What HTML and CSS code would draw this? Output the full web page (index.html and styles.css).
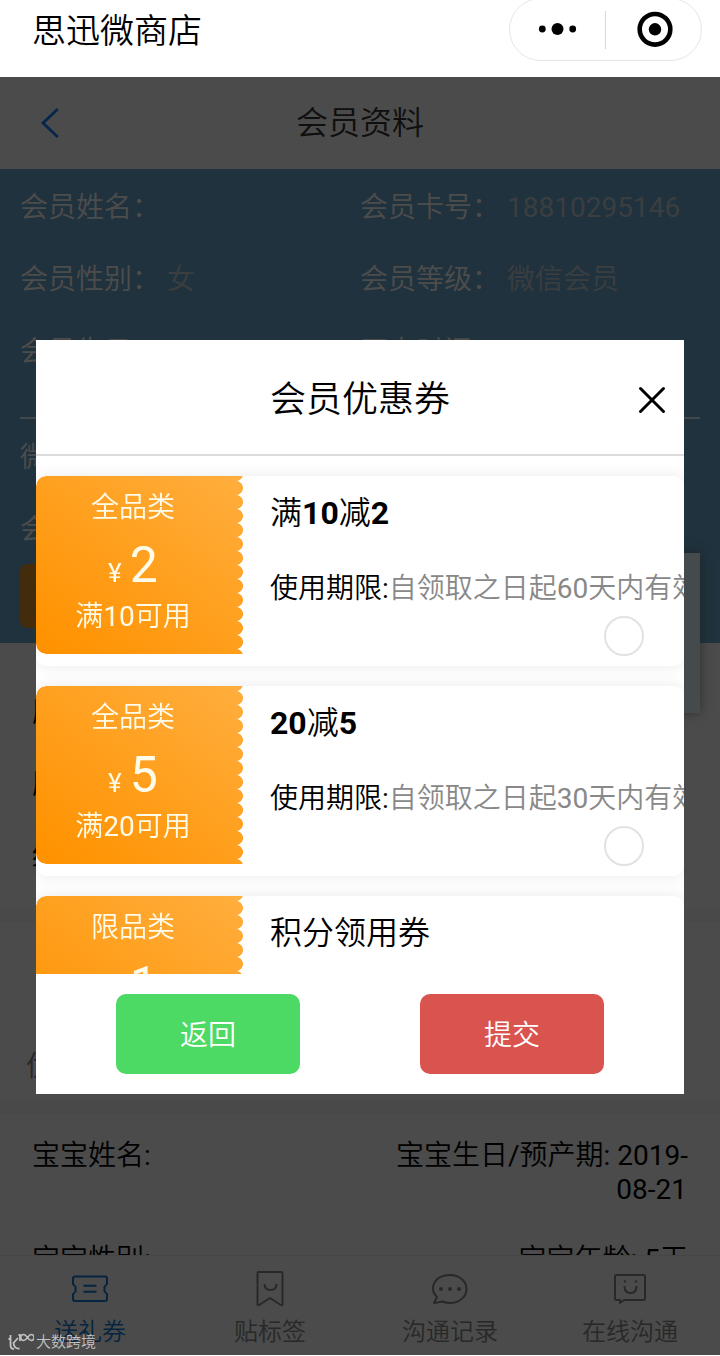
FILE: index.html
```
<!DOCTYPE html>
<html lang="zh-CN">
<head>
<meta charset="utf-8">
<title>会员资料</title>
<link rel="stylesheet" href="styles.css">
</head>
<body>
<div class="app">
  <header class="topbar">
    <h1 class="topbar-title">思迅微商店</h1>
    <div class="capsule">
      <svg class="capsule-icon" width="95" height="62" viewBox="0 0 95 62"><circle cx="32.300" cy="30" r="3.400"/><circle cx="47.500" cy="30" r="6"/><circle cx="62.700" cy="30" r="3.400"/></svg>
      <span class="capsule-line"></span>
      <svg class="capsule-icon" width="96" height="62" viewBox="0 0 96 62"><circle cx="50" cy="30.300" r="15.300" fill="none" stroke="#000" stroke-width="4.600"/><circle cx="50" cy="30.300" r="6.200"/></svg>
    </div>
  </header>

  <main class="page">
    <nav class="navbar">
      <svg class="back" width="24" height="36" viewBox="0 0 24 36"><path d="M21.800 4 7 18l14.800 14" fill="none" stroke="#157efb" stroke-width="2.800"/></svg>
      <h2 class="navbar-title">会员资料</h2>
    </nav>
    <section class="profile">
      <div class="row"><p class="cell">会员姓名：</p><p class="cell">会员卡号：<span class="value">18810295146</span></p></div>
      <div class="row"><p class="cell">会员性别：<span class="value">女</span></p><p class="cell">会员等级：<span class="value">微信会员</span></p></div>
      <div class="row"><p class="cell">会员生日：</p><p class="cell">开卡时间：</p></div>
      <div class="divider"></div>
      <div class="row"><p class="cell">微信</p></div>
      <div class="row"><p class="cell">会员</p></div>
      <div class="profile-action"></div>
      <div class="popover"></div>
    </section>
    <section class="stats">
      <p class="stat">历史</p><p class="stat">历史</p><p class="stat">结余</p>
    </section>
    <section class="offers"><p class="offer-label">优惠</p></section>
    <section class="baby">
      <div class="baby-row"><p>宝宝姓名:</p><p class="baby-right">宝宝生日/预产期: 2019-<br><span class="baby-day">08-21</span></p></div>
      <div class="baby-row"><p>宝宝性别:</p><p class="baby-right">宝宝年龄: 5天</p></div>
    </section>
    <footer class="tabs">
      <div class="tab tab-active">
        <svg class="tab-icon" width="40" height="40" viewBox="0 0 40 40"><path d="M3 8.500q0-2 2-2h30q2 0 2 2v5.500q-1 1.500-2.500 2.500v5q1.500 1 2.500 2.500V29q0 2-2 2H5q-2 0-2-2v-5q1.500-1 2.500-2.500v-5Q4 15.500 3 14z"/><path d="M13.500 15.700h13M13.500 21.700h13"/></svg>
        <span>送礼券</span>
      </div>
      <div class="tab">
        <svg class="tab-icon" width="40" height="40" viewBox="0 0 40 40"><path d="M8.500 2h23q1 0 1 1v31q0 2-1.600 1L20 28 9.100 35q-1.600 1-1.600-1V3q0-1 1-1z"/><path d="M14.500 14q0 6 6 6t6-6"/></svg>
        <span>贴标签</span>
      </div>
      <div class="tab">
        <svg class="tab-icon" width="40" height="40" viewBox="0 0 40 40"><path d="M7 27Q2.500 22.500 3 17.500C4 8.500 12 5 20 5c9 0 16.500 6 16.500 14S29 33 20 33q-4 0-7-1.500L4 33z"/><g class="tab-dots"><circle cx="11" cy="19" r="2"/><circle cx="20" cy="19" r="2"/><circle cx="29" cy="19" r="2"/></g></svg>
        <span>沟通记录</span>
      </div>
      <div class="tab">
        <svg class="tab-icon" width="40" height="40" viewBox="0 0 40 40"><path d="M6.500 5h27Q35 5 35 6.500v22q0 1.500-1.500 1.500H14l-4 3v-3H6.500Q5 30 5 28.500v-22Q5 5 6.500 5z"/><path d="M14.500 16q0 7 6 7t6-7"/><g class="tab-dots"><circle cx="15" cy="11.500" r="1.200"/><circle cx="26" cy="11.500" r="1.200"/></g></svg>
        <span>在线沟通</span>
      </div>
    </footer>
  </main>

  <div class="mask">
    <section class="modal">
      <header class="modal-head">
        <h3 class="modal-title">会员优惠券</h3>
        <svg class="close" width="28" height="28" viewBox="0 0 28 28"><path d="M2.500 2.500l23 23M25.500 2.500l-23 23" fill="none" stroke="#000" stroke-width="3" stroke-linecap="round"/></svg>
      </header>
      <div class="coupons">
        <article class="coupon">
          <div class="ticket"><p class="kind">全品类</p><p class="amount"><small>¥</small>2</p><p class="limit">满10可用</p></div>
          <div class="info"><h4 class="name">满<b>10</b>减<b>2</b></h4><p class="term">使用期限:<span class="term-value">自领取之日起60天内有效</span></p><span class="radio"></span></div>
        </article>
        <article class="coupon">
          <div class="ticket"><p class="kind">全品类</p><p class="amount"><small>¥</small>5</p><p class="limit">满20可用</p></div>
          <div class="info"><h4 class="name"><b>20</b>减<b>5</b></h4><p class="term">使用期限:<span class="term-value">自领取之日起30天内有效</span></p><span class="radio"></span></div>
        </article>
        <article class="coupon">
          <div class="ticket"><p class="kind">限品类</p><p class="amount"><small>¥</small>1</p></div>
          <div class="info"><h4 class="name">积分领用券</h4></div>
        </article>
      </div>
      <footer class="actions"><button class="btn btn-back">返回</button><button class="btn btn-submit">提交</button></footer>
    </section>
  </div>

  <div class="watermark">
    <svg width="26" height="18" viewBox="0 0 26 18"><path d="M2.500 2v10q0 4 3.500 4M0.500 6h2M5 10.500l5-5.500M5.500 10q.5 6 6 5.500M10.500 2h1.500v6" fill="none" stroke="#c2c2c2" stroke-width="1.800"/><path d="M19.500 4.500c-1.500-2-2.500-3-3.700-3a2.800 2.800 0 0 0 0 6c1.200 0 2.200-1 3.700-3s2.500-3 3.500-3a2.800 2.800 0 0 1 0 6c-1 0-2-1-3.500-3z" fill="none" stroke="#c2c2c2" stroke-width="1.400"/></svg>
    <span>大数跨境</span>
  </div>
</div>
</body>
</html>
```
FILE: styles.css
```
* { box-sizing: border-box; margin: 0; padding: 0; }
body { background: #fff; font-family: Roboto, "Noto Sans CJK SC DemiLight", "Noto Sans CJK SC", sans-serif; font-size: 28px; color: #000; }
h1, h2, h3, h4 { font-weight: 400; }
.app { position: relative; width: 720px; height: 1356px; overflow: hidden; display: flex; flex-direction: column; font-weight: 400; }

.topbar { height: 77px; display: flex; justify-content: space-between; padding: 0 18px 0 32px; }
.topbar-title { font-size: 34px; line-height: 62px; }
.capsule { width: 193px; height: 63px; margin-top: -2px; border: 1px solid #e6e6e6; border-radius: 32px; display: flex; align-items: center; }
.capsule-icon { flex: none; }
.capsule-line { flex: none; width: 1px; height: 38px; margin-right: -1px; background: #d8d8d8; }

.page { height: 1278px; background: #fafafa; overflow: hidden; display: flex; flex-direction: column; }
.navbar { height: 92px; flex: none; display: flex; align-items: center; padding-left: 36px; }
.navbar-title { flex: 1; margin-right: 60px; text-align: center; font-size: 32px; line-height: 90px; color: #333; }

.profile { position: relative; height: 474px; flex: none; background: #6ba7cb; color: #fff; padding: 3px 20px; }
.row { height: 72px; line-height: 72px; display: grid; grid-template-columns: 1fr 1fr; }
.value { margin-left: 7px; color: #c4d0d6; }
.divider { height: 2px; margin: 29px 0 3px; background: #fff; opacity: .8; }
.profile-action { width: 160px; height: 64px; margin-top: -2px; border-radius: 8px; background: #e09326; }
.popover { position: absolute; right: 20px; top: 384px; width: 220px; height: 160px; background: #e8fafe; box-shadow: 0 0 10px rgba(90, 90, 90, .6); }

.stats { height: 266px; flex: none; padding: 34px 32px 0; }
.stat { height: 72px; line-height: 72px; }
.offers { height: 205px; flex: none; padding-top: 113px; border-top: 13px solid #f5f5f5; border-bottom: 13px solid #f4f4f4; }
.offer-label { padding-left: 26px; line-height: 64px; color: #888; }
.baby { height: 141px; flex: none; padding: 25px 32px 0 32px; overflow: hidden; }
.baby-row { display: flex; justify-content: space-between; line-height: 34px; height: 104px; }
.baby-right { text-align: right; }
.baby-day { padding-right: 1px; }

.tabs { height: 100px; flex: none; display: grid; grid-template-columns: repeat(4, 1fr); border-top: 1px solid #eaeaea; }
.tab { display: flex; flex-direction: column; align-items: center; font-size: 24px; line-height: 38px; padding-top: 14px; color: #888; }
.tab span { margin-top: 3px; }
.tab-active { color: #157ad8; }
.tab-icon { flex: none; fill: none; stroke: currentColor; stroke-width: 2; stroke-linejoin: round; }
.tab-dots { fill: currentColor; stroke: none; }

.mask { position: absolute; inset: 77px 0 1px; background: rgba(0, 0, 0, .7); padding: 263px 36px 0; }
.modal { height: 754px; background: #fff; display: flex; flex-direction: column; }
.modal-head { height: 116px; flex: none; display: flex; align-items: center; border-bottom: 2px solid #dcdcdc; padding: 6px 18px 0 46px; }
.modal-title { flex: 1; text-align: center; font-size: 36px; line-height: 60px; }
.close { flex: none; }
.coupons { height: 518px; flex: none; padding-top: 20px; overflow: hidden; }
.coupon { display: flex; height: 190px; margin-bottom: 20px; border-radius: 10px; background: #fff; box-shadow: 0 0 16px rgba(0, 0, 0, .09); }
.ticket {
  width: 207px; height: 178px; flex: none; padding-right: 13px; border-radius: 10px 0 0 10px;
  background: linear-gradient(38deg, #ff9200 5%, #ffae3e);
  color: #fffbe9; text-align: center; white-space: nowrap;
  -webkit-mask: linear-gradient(#000, #000) 0 0 / 200px 100% no-repeat, radial-gradient(circle at 0 7px, #000 6.600px, transparent 7.300px) 200px 5px / 7px 14px repeat-y;
  mask: linear-gradient(#000, #000) 0 0 / 200px 100% no-repeat, radial-gradient(circle at 0 7px, #000 6.600px, transparent 7.300px) 200px 5px / 7px 14px repeat-y;
}
.kind { line-height: 40px; padding-top: 12px; }
.amount { font-size: 50px; line-height: 68px; height: 67px; padding-top: 3px; }
.amount small { font-size: 26px; margin-right: 8px; }
.limit { line-height: 40px; margin-top: 2px; }
.info { position: relative; flex: 1; padding: 12px 0 0 27px; white-space: nowrap; }
.name { font-size: 32px; line-height: 50px; }
.name b { font-weight: 700; }
.term { line-height: 50px; margin-top: 26px; }
.term-value { color: #888; }
.radio { position: absolute; left: 361px; top: 140px; width: 40px; height: 40px; border: 2px solid #e2e2e2; border-radius: 50%; }
.actions { flex: 1; padding: 20px 80px; display: flex; justify-content: space-between; background: #fff; }
.btn { width: 184px; height: 80px; padding-top: 4px; border: 0; border-radius: 10px; color: #fff; font-family: inherit; font-size: 28px; line-height: 76px; }
.btn-back { background: #4cd964; }
.btn-submit { background: #d9534f; }

.watermark { position: absolute; left: 8px; bottom: 4px; display: flex; align-items: center; gap: 2px; font-size: 15px; line-height: 20px; font-weight: 500; color: #c2c2c2; }
```
